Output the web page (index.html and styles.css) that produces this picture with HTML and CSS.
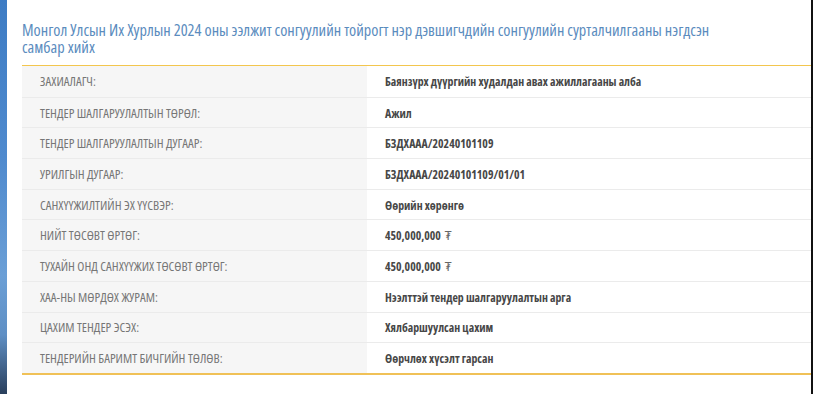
FILE: index.html
```html
<!DOCTYPE html>
<html lang="mn">
<head>
<meta charset="utf-8">
<title>Тендер</title>
<link rel="stylesheet" href="styles.css">
</head>
<body>
<div class="page">
  <div class="side"></div>
  <main class="main">
    <h1 class="title">Монгол Улсын Их Хурлын 2024 оны ээлжит сонгуулийн тойрогт нэр дэвшигчдийн сонгуулийн сурталчилгааны нэгдсэн самбар хийх</h1>
    <div class="table">
      <div class="row"><div class="label">ЗАХИАЛАГЧ:</div><div class="value">Баянзүрх дүүргийн худалдан авах ажиллагааны алба</div></div>
      <div class="row"><div class="label">ТЕНДЕР ШАЛГАРУУЛАЛТЫН ТӨРӨЛ:</div><div class="value">Ажил</div></div>
      <div class="row"><div class="label">ТЕНДЕР ШАЛГАРУУЛАЛТЫН ДУГААР:</div><div class="value">БЗДХААА/20240101109</div></div>
      <div class="row"><div class="label">УРИЛГЫН ДУГААР:</div><div class="value">БЗДХААА/20240101109/01/01</div></div>
      <div class="row"><div class="label">САНХҮҮЖИЛТИЙН ЭХ ҮҮСВЭР:</div><div class="value">Өөрийн хөрөнгө</div></div>
      <div class="row"><div class="label">НИЙТ ТӨСӨВТ ӨРТӨГ:</div><div class="value">450,000,000 <span class="cur">₮</span></div></div>
      <div class="row"><div class="label">ТУХАЙН ОНД САНХҮҮЖИХ ТӨСӨВТ ӨРТӨГ:</div><div class="value">450,000,000 <span class="cur">₮</span></div></div>
      <div class="row"><div class="label">ХАА-НЫ МӨРДӨХ ЖУРАМ:</div><div class="value">Нээлттэй тендер шалгаруулалтын арга</div></div>
      <div class="row"><div class="label">ЦАХИМ ТЕНДЕР ЭСЭХ:</div><div class="value">Хялбаршуулсан цахим</div></div>
      <div class="row"><div class="label">ТЕНДЕРИЙН БАРИМТ БИЧГИЙН ТӨЛӨВ:</div><div class="value">Өөрчлөх хүсэлт гарсан</div></div>
    </div>
  </main>
</div>
</body>
</html>
```

FILE: styles.css
```css
html, body {
  margin: 0;
  padding: 0;
  background: #ffffff;
}
.page {
  display: flex;
  width: 813px;
  height: 394px;
  box-sizing: border-box;
  border-right: 2px solid #111;
  overflow: hidden;
}
.side {
  width: 7px;
  flex: none;
  background: linear-gradient(180deg, #3d7cc4 0%, #4f8ace 40%, #6b9fd6 70%, #5f8fc4 85%, #2a3f5c 100%);
}
.main {
  flex: 1;
  padding: 22px 0 0 15px;
  font-family: "Open Sans", "DejaVu Sans", sans-serif;
  font-stretch: 75%;
}
.title {
  margin: 0 0 9px 0;
  width: 700px;
  font-size: 16.3px;
  font-weight: 400;
  line-height: 17px;
  color: #5b8cbe;
}
.table {
  border-top: 1.5px solid #f3c64e;
  border-bottom: 2px solid #f0c157;
}
.row {
  display: flex;
  height: 30.7px;
  border-top: 1px solid #ebebeb;
  box-sizing: border-box;
}
.row:first-child {
  border-top: none;
}
.label {
  width: 345px;
  flex: none;
  background: #f6f6f6;
  padding-left: 18px;
  box-sizing: border-box;
  display: flex;
  align-items: center;
  font-size: 13px;
  font-weight: 400;
  color: #767676;
}
.value {
  flex: 1;
  padding-left: 18px;
  display: flex;
  align-items: center;
  gap: 4px;
  font-size: 11.8px;
  font-weight: 700;
  color: #474747;
}
.cur {
  font-weight: 400;
  color: #666;
}
```
